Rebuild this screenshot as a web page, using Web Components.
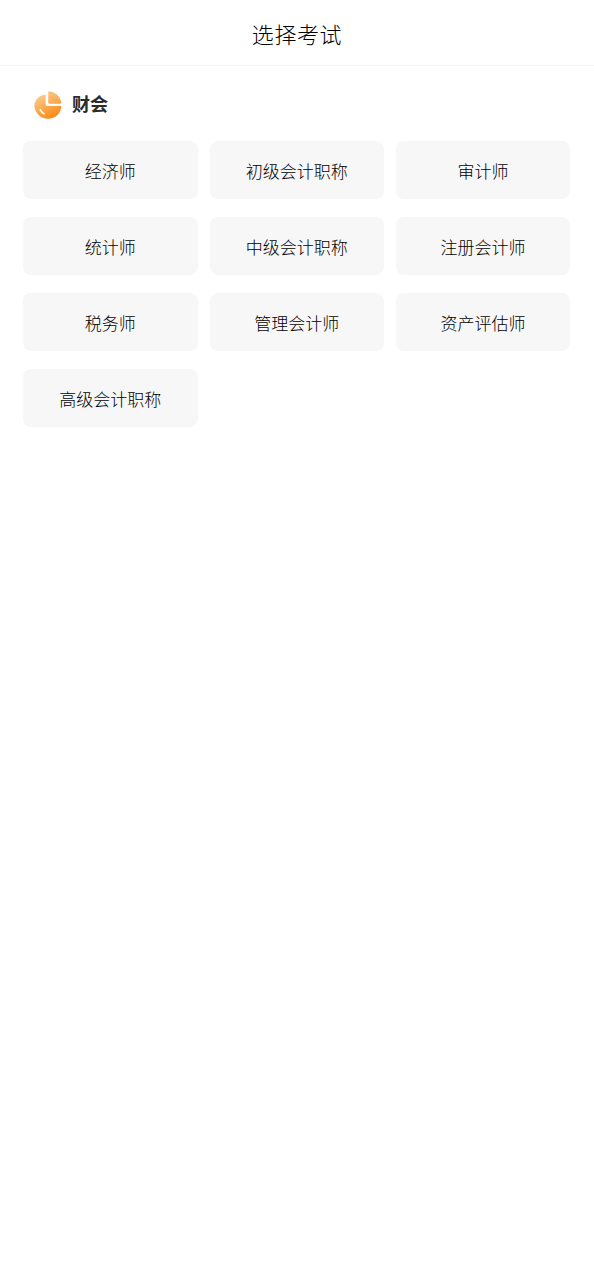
<!DOCTYPE html>
<html lang="zh">
<head>
<meta charset="utf-8">
<title>选择考试</title>
<style>
  html, body { margin: 0; padding: 0; background: #fff; }
  body { font-family: "Noto Sans CJK SC", "Liberation Sans", sans-serif; }
</style>
</head>
<body>
<exam-page>
  <nav-title>选择考试</nav-title>
  <exam-section title="财会">
    <exam-item>经济师</exam-item>
    <exam-item>初级会计职称</exam-item>
    <exam-item>审计师</exam-item>
    <exam-item>统计师</exam-item>
    <exam-item>中级会计职称</exam-item>
    <exam-item>注册会计师</exam-item>
    <exam-item>税务师</exam-item>
    <exam-item>管理会计师</exam-item>
    <exam-item>资产评估师</exam-item>
    <exam-item>高级会计职称</exam-item>
  </exam-section>
</exam-page>
<script>
class ExamPage extends HTMLElement {
  constructor() {
    super();
    this.attachShadow({mode: 'open'});
    this.shadowRoot.innerHTML = `
      <style>
        :host { display: block; width: 594px; min-height: 1280px; background: #fff; }
      </style>
      <slot></slot>`;
  }
}

class NavTitle extends HTMLElement {
  constructor() {
    super();
    this.attachShadow({mode: 'open'});
    this.shadowRoot.innerHTML = `
      <style>
        :host {
          display: flex; align-items: center; justify-content: center;
          height: 65px; border-bottom: 1px solid #f5f5f5;
          font-size: 22px; font-weight: 300; letter-spacing: 0.6px; color: #000;
        }
      </style>
      <slot></slot>`;
  }
}

class ExamSection extends HTMLElement {
  constructor() {
    super();
    this.attachShadow({mode: 'open'});
    this.shadowRoot.innerHTML = `
      <style>
        :host { display: block; padding: 24px 23px 0 23px; }
        .head {
          display: flex; align-items: center; gap: 10px;
          height: 30px; padding-left: 11px; margin-bottom: 21px;
          font-size: 18px; font-weight: 700; color: #2b2b2b;
        }
        .head span { margin-top: -5px; }
        svg { width: 28px; height: 28px; flex: none; margin-top: -1px; }
        .grid {
          display: grid; grid-template-columns: 174.5px 174.5px 174px;
          column-gap: 12px; row-gap: 18px;
        }
      </style>
      <div class="head">
        <svg viewBox="0 0 28 28">
          <defs>
            <linearGradient id="pie" gradientUnits="userSpaceOnUse" x1="5" y1="2" x2="19" y2="27">
              <stop offset="0" stop-color="#f9d09a"/>
              <stop offset="1" stop-color="#f98a12"/>
            </linearGradient>
          </defs>
          <path fill="url(#pie)" d="M11.6 3.4V13.6C11.6 14.4 12.2 15 13 15H27.4C27.1 22.4 21.2 27.8 14 27.8C6.4 27.8 .4 21.8 .4 14.6C.4 8.9 5 4 11.6 3.4Z"/>
          <path fill="url(#pie)" d="M14.2 1.2C14.2 .6 14.7 .2 15.4 .3C21.6 1 26.6 6 27.3 11.6C27.4 12.3 27 12.8 26.3 12.8H15.4C14.7 12.8 14.2 12.3 14.2 11.6Z"/>
          <path fill="none" stroke="#fff" stroke-width="1.5" stroke-linecap="round" d="M6.2 18.6C7 20.6 8.4 21.9 10.2 22.8"/>
        </svg>
        <span></span>
      </div>
      <div class="grid"><slot></slot></div>`;
  }
  connectedCallback() {
    this.shadowRoot.querySelector('span').innerText = this.getAttribute('title');
  }
}

class ExamItem extends HTMLElement {
  constructor() {
    super();
    this.attachShadow({mode: 'open'});
    this.shadowRoot.innerHTML = `
      <style>
        :host {
          display: flex; align-items: center; justify-content: center;
          height: 58px; box-sizing: border-box;
          background: #f7f7f7; border-radius: 8px;
          font-size: 17px; font-weight: 300; color: #000;
        }
      </style>
      <slot></slot>`;
  }
}

customElements.define('exam-page', ExamPage);
customElements.define('nav-title', NavTitle);
customElements.define('exam-section', ExamSection);
customElements.define('exam-item', ExamItem);
</script>
</body>
</html>
